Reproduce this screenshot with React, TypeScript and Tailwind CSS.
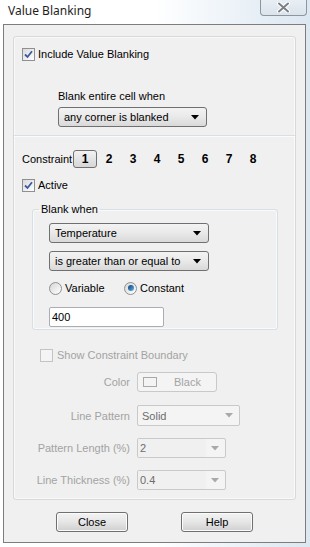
import React from "react";

const Check = ({ checked, disabled }: { checked?: boolean; disabled?: boolean }) => (
  <span
    className={
      "flex h-[13px] w-[13px] shrink-0 items-center justify-center border " +
      (disabled
        ? "border-[#c4c4c4] bg-[#f4f4f4]"
        : "border-[#8e8f8f] bg-gradient-to-br from-[#d9d9d9] to-white")
    }
  >
    {checked && (
      <svg width="9" height="9" viewBox="0 0 9 9">
        <path d="M1 4.5 L3.5 7 L8 1.2" fill="none" stroke="#3d5a9e" strokeWidth="1.8" />
      </svg>
    )}
  </span>
);

const Radio = ({ checked }: { checked?: boolean }) => (
  <span className="flex h-[13px] w-[13px] shrink-0 items-center justify-center rounded-full border border-[#8e8f8f] bg-gradient-to-br from-[#d6d6d6] to-white">
    {checked && (
      <span className="h-[6px] w-[6px] rounded-full bg-gradient-to-br from-[#0b3f7a] to-[#5fb2ea]" />
    )}
  </span>
);

const Arrow = ({ color = "#000" }: { color?: string }) => (
  <svg width="8" height="5" viewBox="0 0 8 5">
    <path d="M0 0 H8 L4 4.5 Z" fill={color} />
  </svg>
);

const Combo = ({ text, w }: { text: string; w: string }) => (
  <div
    className={
      w +
      " flex h-[20px] items-center justify-between rounded-[3px] border border-[#707070] bg-gradient-to-b from-[#f3f3f3] via-[#e9e9e9] to-[#d9d9d9] pl-[5px] pr-[7px]"
    }
  >
    <span>{text}</span>
    <Arrow />
  </div>
);

const WinButton = ({ label }: { label: string }) => (
  <div className="flex h-[20px] w-[72px] items-center justify-center rounded-[3px] border border-[#707070] bg-gradient-to-b from-[#f3f3f3] via-[#e6e6e6] to-[#cfcfcf] shadow-[inset_0_0_0_1px_#fbfbfb]">
    {label}
  </div>
);

const DisabledCombo = ({ text, w, h = "h-[20px]", edit }: { text: string; w: string; h?: string; edit?: boolean }) => (
  <div
    className={
      w +
      " " +
      h +
      " flex items-center justify-between rounded-[2px] border border-[#c9c9c9] bg-[#f4f4f4] pr-[6px] text-[#6d6d6d]"
    }
  >
    <span className={edit ? "flex h-full w-[68px] items-center bg-[#f0f0f0] pl-[2px]" : "pl-[4px]"}>{text}</span>
    <Arrow color="#a9a9a9" />
  </div>
);

const FormRow = ({ label, children, mt }: { label: string; children: React.ReactNode; mt: string }) => (
  <div className={mt + " flex items-center"}>
    <span className="w-[117px] pr-[1px] text-right text-[#a3a3a3]">{label}</span>
    <div className="ml-[6px]">{children}</div>
  </div>
);

export default function App() {
  return (
    <div className="relative h-[547px] w-[310px] overflow-hidden bg-gradient-to-r from-white via-white to-[#dbe7f1] font-['Liberation_Sans',Arial,sans-serif] text-[11px] leading-[14px] text-black">
      {/* title bar */}
      <div className="flex h-[24px] items-start">
        <span className="ml-[8px] mt-[3px] font-['Noto_Sans',sans-serif] text-[12px] leading-[16px] text-[#1e1e1e]">
          Value Blanking
        </span>
        <div className="ml-auto mr-[3px] flex h-[16px] w-[47px] items-center justify-center rounded-b-[4px] border border-t-0 border-[#8f959c] bg-gradient-to-b from-[#e8eef4] to-[#dbe4ec]">
          <svg width="13" height="11" viewBox="0 0 13 11">
            <path d="M2 1.5 L11 9.5 M11 1.5 L2 9.5" stroke="#ffffff" strokeWidth="4" strokeLinecap="round" />
            <path d="M2 1.5 L11 9.5 M11 1.5 L2 9.5" stroke="#7b8088" strokeWidth="2" strokeLinecap="round" />
          </svg>
        </div>
      </div>

      {/* window body */}
      <div className="ml-[3px] mr-[4px] flex h-[519px] flex-col border border-[#7d7d7d] bg-[#f0f0f0] px-[9px] pt-[11px]">
        <div className="flex flex-col rounded-[3px] border border-[#d6d9dc] pb-[9px] shadow-[inset_0_0_0_1px_#fafafa]">
          <div className="ml-[8px] mt-[10px] flex items-center gap-[3px]">
            <Check checked />
            <span>Include Value Blanking</span>
          </div>
          <div className="ml-[44px] mt-[28px]">Blank entire cell when</div>
          <div className="ml-[44px] mt-[4px]">
            <Combo text="any corner is blanked" w="w-[149px]" />
          </div>
          <div className="mt-[8px] border-t border-[#dadfe3] shadow-[0_1px_0_#fbfbfb]" />

          <div className="ml-[8px] mt-[14px] flex h-[18px] items-center">
            <span className="w-[51px]">Constraint</span>
            <div className="flex h-[18px] w-[24px] items-center justify-center rounded-[3px] border border-[#707070] bg-gradient-to-b from-[#f2f2f2] to-[#d6d6d6] text-[12px] font-bold">
              1
            </div>
            {["2", "3", "4", "5", "6", "7", "8"].map((n) => (
              <span key={n} className="w-[24px] text-center text-[12px] font-bold">
                {n}
              </span>
            ))}
          </div>
          <div className="ml-[8px] mt-[10px] flex items-center gap-[3px]">
            <Check checked />
            <span>Active</span>
          </div>

          <fieldset className="ml-[18px] mt-[10px] w-[246px] rounded-[3px] border border-[#d5dfe5] pb-[2px] shadow-[inset_0_0_0_1px_#fafafa]">
            <legend className="ml-[6px] px-[2px] leading-[14px]">Blank when</legend>
            <div className="ml-[16px] mt-[7px]">
              <Combo text="Temperature" w="w-[160px]" />
            </div>
            <div className="ml-[16px] mt-[8px]">
              <Combo text="is greater than or equal to" w="w-[160px]" />
            </div>
            <div className="ml-[16px] mt-[10px] flex items-center">
              <Radio />
              <span className="ml-[3px] w-[59px]">Variable</span>
              <Radio checked />
              <span className="ml-[3px]">Constant</span>
            </div>
            <div className="ml-[16px] mt-[12px] flex h-[20px] w-[115px] items-center rounded-[2px] border border-[#abadb3] bg-white pl-[2px]">
              400
            </div>
          </fieldset>

          <div className="ml-[26px] mt-[18px] flex items-center gap-[4px] text-[#a3a3a3]">
            <Check disabled />
            <span>Show Constraint Boundary</span>
          </div>

          <FormRow label="Color" mt="mt-[10px]">
            <div className="flex h-[20px] w-[80px] items-center rounded-[3px] border border-[#c9c9c9] bg-[#f4f4f4] text-[#a3a3a3]">
              <span className="ml-[5px] h-[10px] w-[14px] border border-[#a9a9a9]" />
              <span className="ml-[17px]">Black</span>
            </div>
          </FormRow>
          <FormRow label="Line Pattern" mt="mt-[13px]">
            <DisabledCombo text="Solid" w="w-[103px]" h="h-[21px]" />
          </FormRow>
          <FormRow label="Pattern Length (%)" mt="mt-[12px]">
            <DisabledCombo text="2" w="w-[89px]" edit />
          </FormRow>
          <FormRow label="Line Thickness (%)" mt="mt-[12px]">
            <DisabledCombo text="0.4" w="w-[89px]" edit />
          </FormRow>
        </div>

        <div className="mt-[12px] flex pl-[43px]">
          <WinButton label="Close" />
          <div className="ml-[53px]">
            <WinButton label="Help" />
          </div>
        </div>
      </div>
    </div>
  );
}
